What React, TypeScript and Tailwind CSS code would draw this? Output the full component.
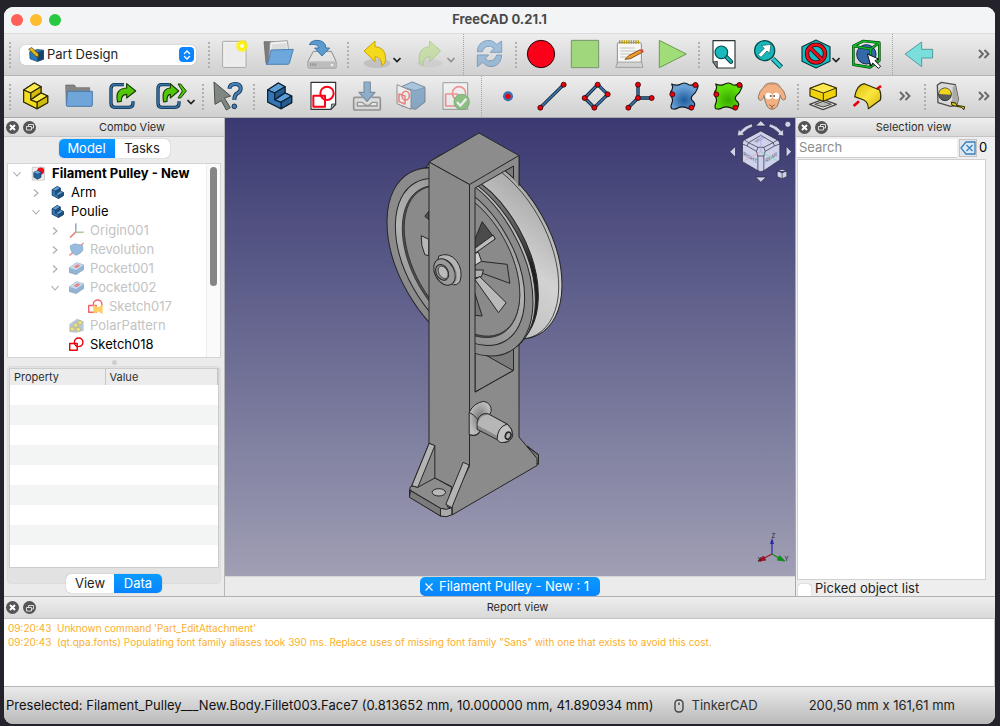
import React, { ReactNode } from "react";

type IconProps = { box: string; children: ReactNode; size?: string };

function Icon({ box, children, size = "size-7" }: IconProps) {
  return (
    <svg viewBox={box} className={`${size} shrink-0 overflow-visible`} fill="none" strokeLinejoin="round" aria-hidden="true">
      {children}
    </svg>
  );
}

function Tool({ label, children, dim }: { label: string; children: ReactNode; dim?: boolean }) {
  return (
    <button type="button" aria-label={label} className={`flex h-10 w-11 shrink-0 items-center justify-center ${dim ? "opacity-50" : ""}`}>
      {children}
    </button>
  );
}

function MenuTool({ label, children, dim }: { label: string; children: ReactNode; dim?: boolean }) {
  return (
    <button type="button" aria-label={label} className={`flex h-10 w-[54px] shrink-0 items-center gap-0.5 pl-3 ${dim ? "opacity-40" : ""}`}>
      {children}
      <svg viewBox="0 0 8 8" className="mt-3 size-2 shrink-0" fill="none" stroke="#222" strokeWidth="1.6" aria-hidden="true">
        <path d="M0.5 2 4 5.5 7.5 2" />
      </svg>
    </button>
  );
}

function Grip() {
  return (
    <div className="flex w-[7px] shrink-0 items-center justify-end pr-[2px]">
      <svg viewBox="0 0 2 26" className="h-[26px] w-[2px]" aria-hidden="true">
        {[0, 4, 8, 12, 16, 20, 24].map((y) => (
          <rect key={y} y={y} width="2" height="2" fill="#b0b0b0" />
        ))}
      </svg>
    </div>
  );
}

function Divider() {
  return (
    <div className="flex w-[9px] shrink-0 justify-center">
      <div className="h-full border-l border-dotted border-[#a5a5a5]" />
    </div>
  );
}

function More({ className }: { className: string }) {
  return (
    <button type="button" aria-label="More tools" className={`flex h-10 shrink-0 items-center justify-center ${className}`}>
      <svg viewBox="0 0 12 10" className="h-[10px] w-3" fill="none" stroke="#666" strokeWidth="1.8" aria-hidden="true">
        <path d="M1 1 5 5 1 9M6.5 1 10.5 5 6.5 9" />
      </svg>
    </button>
  );
}

const Dot = ({ x, y }: { x: number; y: number }) => (
  <circle cx={x} cy={y} r="7.5" fill="#e8000d" stroke="#3a0505" strokeWidth="2.5" />
);

const BLOB =
  "M5 6Q16 12 28 8 44-2 56 8 66 12 78 3 88 8 82 20 78 32 68 40 60 48 67 56 78 64 72 74 66 84 56 80 42 72 28 76 16 84 6 80 0 76 6 62 10 54 4 42-2 32 6 24 10 14 5 6Z";

function BodyShape({ light, mid, dark, line }: { light: string; mid: string; dark: string; line: string }) {
  return (
    <g stroke={line} strokeWidth="3.5">
      <path d="M8 24 40 3 60 14V32L80 42V62L48 80 8 60Z" fill={mid} />
      <path d="M8 24 40 3 60 14 29 33Z" fill={light} />
      <path d="M29 33 60 14V32L48 40 29 54Z" fill={dark} />
      <path d="M29 54 60 33 80 42 48 61Z" fill={light} />
      <path d="M48 61 80 42V62L48 80Z" fill={dark} />
      <path d="M8 24 29 33V54L48 61V80L8 60Z" fill={mid} />
    </g>
  );
}

function FileToolbar() {
  return (
    <div role="toolbar" aria-label="File and view" className="flex h-[42px] shrink-0 border-t border-[#dcdcdc] bg-linear-to-b from-[#ededed] to-[#d0d0d0] pl-[2px]">
      <Grip />
      <div className="relative mr-[9px] ml-[7px] flex items-center">
        <select aria-label="Workbench" className="h-5 w-44 appearance-none rounded-[5px] bg-white pl-[27px] text-[13px] text-[#262626] shadow-[0_0_1px_rgba(0,0,0,0.35)] outline-none">
          <option>Part Design</option>
        </select>
        <svg viewBox="0 0 48 44" className="pointer-events-none absolute left-2 h-[15px] w-4" aria-hidden="true">
          <path d="M5 14 28 7 47 9V36L28 43 6 35Z" fill="#2b79bd" stroke="#173a5b" strokeWidth="2" />
          <path d="M28 15 47 9V36L28 43Z" fill="#16436f" />
          <path d="M2 6 11 1 31 20 33 30 23 27Z" fill="#e3b91b" stroke="#3b3108" strokeWidth="2" />
        </svg>
        <span className="pointer-events-none absolute right-0.5 flex size-[15px] items-center justify-center rounded-[4px] bg-[#0a84ff]">
          <svg viewBox="0 0 8 12" className="h-3 w-2" fill="none" stroke="#fff" strokeWidth="1.4" strokeLinecap="round" aria-hidden="true">
            <path d="M1.5 4.5 4 2 6.5 4.5M1.5 7.5 4 10 6.5 7.5" />
          </svg>
        </span>
      </div>
      <Grip />
      <Tool label="New">
        <Icon box="0 0 84 84">
          <defs>
            <radialGradient id="glow"><stop offset="0.2" stopColor="#fff" /><stop offset="0.35" stopColor="#fff200" /><stop offset="0.7" stopColor="#fff200" stopOpacity="0.85" /><stop offset="1" stopColor="#fff200" stopOpacity="0" /></radialGradient>
          </defs>
          <rect x="8" y="4" width="70" height="78" rx="2" fill="#f4f4f3" stroke="#a7a7a7" strokeWidth="3" />
          <rect x="13" y="9" width="60" height="68" fill="#ececec" />
          <circle cx="66" cy="18" r="20" fill="url(#glow)" />
        </Icon>
      </Tool>
      <Tool label="Open">
        <Icon box="0 0 84 84">
          <path d="M0 5H30V70H6Z" fill="#7c7c7c" stroke="#5c5c5c" strokeWidth="2" />
          <path d="M18 6 70 2 75 40 70 62H14Z" fill="#f3f3f3" stroke="#909090" strokeWidth="2.5" />
          <path d="M24 13 68 9V40H20Z" fill="#dcdcdc" />
          <path d="M21 30 88 28 76 70Q74 73 70 73H6Q12 70 14 60Z" fill="#6ea7dc" stroke="#3c74aa" strokeWidth="2.5" />
        </Icon>
      </Tool>
      <Tool label="Save">
        <Icon box="0 0 84 84">
          <path d="M16 34H70L84 64V82Q84 84 81 84H4Q0 84 0 80V64Z" fill="#e3e3e3" stroke="#8b8b8b" strokeWidth="3" />
          <path d="M1 64H84V82H1Z" fill="#bcbcbc" />
          <path d="M8 70V78M13 70V78M18 70V78M23 70V78" stroke="#808080" strokeWidth="2" />
          <circle cx="72" cy="75" r="4" fill="#eee" />
          <path d="M4 14Q8 2 24 1 52 0 54 24H65L42 48 20 24H33Q30 10 4 14Z" fill="#5b9bcf" stroke="#30699c" strokeWidth="2.5" />
        </Icon>
      </Tool>
      <Grip />
      <MenuTool label="Undo">
        <Icon box="0 0 84 84">
          <ellipse cx="42" cy="70" rx="40" ry="14" fill="#999" opacity="0.35" />
          <path d="M3 33 36 3V20Q67 22 68 54 68 72 56 77 57 52 36 50V65Z" fill="#f5d91d" stroke="#c9a40a" strokeWidth="3" />
        </Icon>
      </MenuTool>
      <MenuTool label="Redo" dim>
        <Icon box="0 0 84 84">
          <ellipse cx="38" cy="70" rx="38" ry="12" fill="#999" opacity="0.35" />
          <path d="M71 33 38 3V20Q7 22 6 54 6 72 18 77 17 52 38 50V65Z" fill="#a5d858" stroke="#72ab28" strokeWidth="3" />
        </Icon>
      </MenuTool>
      <Divider />
      <Tool label="Refresh" dim>
        <Icon box="0 0 84 84">
          <g fill="#5e9bd2" stroke="#27609a" strokeWidth="3">
            <path d="M4 35Q5 12 24 4 45-5 62 13L77 3V37H43L54 25Q44 15 31 20 21 25 19 35Z" />
            <path d="M77 45Q76 68 58 77 37 86 20 67L4 80V45H38L27 56Q37 67 50 61 60 56 62 45Z" />
          </g>
        </Icon>
      </Tool>
      <Grip />
      <Tool label="Record macro">
        <Icon box="0 0 84 84"><circle cx="42" cy="42" r="41" fill="#fa0019" stroke="#26090d" strokeWidth="3" /></Icon>
      </Tool>
      <Tool label="Stop macro">
        <Icon box="0 0 84 84"><rect x="1" y="1" width="82" height="82" fill="#a0d67c" stroke="#78956a" strokeWidth="3" /></Icon>
      </Tool>
      <Tool label="Macros">
        <Icon box="0 0 84 84">
          <rect x="7" y="8" width="72" height="72" rx="3" fill="#f6f6f5" stroke="#8e8e8e" strokeWidth="3" />
          <path d="M2 82 8 66H80L84 82Z" fill="#d2d2d2" stroke="#888" strokeWidth="2" />
          <path d="M14 1V11M21 1V11M28 1V11M35 1V11M42 1V11M49 1V11M56 1V11M63 1V11M70 1V11" stroke="#b39a10" strokeWidth="4" />
          <path d="M16 24H60M16 33H68M16 42H44M16 51H34" stroke="#c4c4c4" strokeWidth="3" />
          <path d="M30 58 42 46 76 29 82 37 46 56Z" fill="#ee9a31" stroke="#6b4210" strokeWidth="2.5" />
          <path d="M74 30 84 28 86 36 80 39Z" fill="#d94747" />
        </Icon>
      </Tool>
      <Tool label="Run macro">
        <Icon box="0 0 84 84"><path d="M1 1 82 42 1 83Z" fill="#a0dc78" stroke="#6c9c52" strokeWidth="3" /></Icon>
      </Tool>
      <Grip />
      <Tool label="Fit all">
        <Icon box="0 0 84 84">
          <path d="M9 2H75V84H22L9 66Z" fill="#fff" stroke="#2e3436" strokeWidth="3.5" />
          <path d="M9 66 22 64V84Z" fill="#888a85" stroke="#2e3436" strokeWidth="2.5" />
          <path d="M46 48 63 65" stroke="#063f40" strokeWidth="13" strokeLinecap="round" />
          <path d="M47 49 63 65" stroke="#17b5b8" strokeWidth="7" strokeLinecap="round" />
          <circle cx="34" cy="37" r="19" fill="#18b9bd" stroke="#074c4d" strokeWidth="3.5" />
        </Icon>
      </Tool>
      <Tool label="Fit selection">
        <Icon box="0 0 84 84">
          <path d="M56 56 82 82" stroke="#074c4d" strokeWidth="15" />
          <path d="M56 56 81 81" stroke="#25ccd0" strokeWidth="9" />
          <circle cx="32" cy="32" r="30" fill="#17b7bb" stroke="#074c4d" strokeWidth="4" />
          <path d="M12 44 31 25 22 17 51 13 47 40 39 33 21 52Z" fill="#fff" stroke="#0c5c5e" strokeWidth="2" />
        </Icon>
      </Tool>
      <MenuTool label="Draw style">
        <Icon box="0 0 84 84">
          <path d="M42 0 84 20V64L42 84 0 64V20Z" fill="#12bec3" stroke="#083c3e" strokeWidth="3.5" />
          <circle cx="42" cy="41" r="27" stroke="#460507" strokeWidth="13" />
          <path d="M23 22 61 60" stroke="#460507" strokeWidth="12" />
          <circle cx="42" cy="41" r="27" stroke="#e8101c" strokeWidth="8" />
          <path d="M22 21 62 61" stroke="#e8101c" strokeWidth="8" />
        </Icon>
      </MenuTool>
      <Tool label="Bounding box">
        <Icon box="0 0 84 84">
          <circle cx="43" cy="43" r="29" fill="#3468a8" stroke="#122b50" strokeWidth="3" />
          <g stroke="#063f0a" strokeWidth="8"><path d="M4 18 34 3 82 8V62L54 82 4 74ZM4 18 56 27 82 8M56 27V80" /></g>
          <g stroke="#10b929" strokeWidth="4.5"><path d="M4 18 34 3 82 8V62L54 82 4 74ZM4 18 56 27 82 8M56 27V80" /></g>
          <path d="M46 42 80 57 69 62 86 79 79 85 62 69 57 79Z" fill="#fff" stroke="#111" strokeWidth="3" />
        </Icon>
      </Tool>
      <Divider />
      <Tool label="Back">
        <Icon box="0 0 84 84"><path d="M0 42 50 6V28H83V54H50V80Z" fill="#7adfdc" stroke="#559b9b" strokeWidth="3" /></Icon>
      </Tool>
      <More className="ml-auto w-[23px]" />
    </div>
  );
}

function ModelToolbar() {
  return (
    <div role="toolbar" aria-label="Part design" className="flex h-[42px] shrink-0 border-t border-[#b5b5b5] bg-linear-to-b from-[#ededed] to-[#d0d0d0] pl-[2px]">
      <Grip />
      <Tool label="Create part">
        <Icon box="0 0 84 84"><BodyShape light="#fce94f" mid="#f2dc1c" dark="#d3bb09" line="#302b00" /></Icon>
      </Tool>
      <Tool label="Create group">
        <Icon box="0 0 84 84">
          <path d="M2 9H28L34 17H74V66H4Z" fill="#858585" stroke="#686868" strokeWidth="2" />
          <path d="M7 28H82V70Q82 73 78 73H7Q4 73 4 70Z" fill="#6fa5d8" stroke="#487baa" strokeWidth="3" />
        </Icon>
      </Tool>
      <Tool label="Make link">
        <Icon box="0 0 84 84">
          <path d="M45 8H18Q6 8 6 20V64Q6 76 18 76H60Q72 76 72 64V58" stroke="#12304a" strokeWidth="10" />
          <path d="M45 8H18Q6 8 6 20V64Q6 76 18 76H60Q72 76 72 64V58" stroke="#3573aa" strokeWidth="5" />
          <path d="M26 60Q16 20 53 18V5L80 27 53 48V37Q36 38 37 58Z" fill="#54c60a" stroke="#173b04" strokeWidth="3.5" />
        </Icon>
      </Tool>
      <MenuTool label="Link actions">
        <Icon box="0 0 84 84">
          <path d="M38 8H14Q3 8 3 20V64Q3 76 14 76H54Q66 76 66 64V58" stroke="#12304a" strokeWidth="10" />
          <path d="M38 8H14Q3 8 3 20V64Q3 76 14 76H54Q66 76 66 64V58" stroke="#3573aa" strokeWidth="5" />
          <path d="M20 60Q12 20 40 18V5L65 27 40 48V37Q29 38 30 58Z" fill="#54c60a" stroke="#173b04" strokeWidth="3.5" />
          <path d="M63 6H71L88 27 71 48H63L76 27Z" fill="#54c60a" stroke="#173b04" strokeWidth="3" />
        </Icon>
      </MenuTool>
      <Grip />
      <Tool label="What's this?">
        <Icon box="0 0 84 84">
          <path d="M0 0 50 42 31 48 49 77 37 84 22 56 3 67Z" fill="#808782" stroke="#4a4f4b" strokeWidth="3" />
          <path d="M46 20Q48 6 64 6 80 6 80 20 80 28 70 34 61 39 61 54" stroke="#12304a" strokeWidth="12" />
          <path d="M46 20Q48 6 64 6 80 6 80 20 80 28 70 34 61 39 61 54" stroke="#4581b8" strokeWidth="7" />
          <circle cx="61" cy="73" r="7" fill="#4581b8" stroke="#12304a" strokeWidth="3" />
        </Icon>
      </Tool>
      <Grip />
      <Tool label="Create body">
        <Icon box="0 0 84 84"><BodyShape light="#5e9fd6" mid="#3476b3" dark="#255d93" line="#0c2238" /></Icon>
      </Tool>
      <Tool label="Create sketch">
        <Icon box="0 0 84 84">
          <path d="M6 1H80V68L66 82H6Z" fill="#fff" stroke="#2e3436" strokeWidth="3.5" />
          <path d="M66 82 68 66 80 66Z" fill="#a7a9a5" stroke="#2e3436" strokeWidth="2.5" />
          <g stroke="#fa0519" strokeWidth="6"><rect x="13" y="41" width="35" height="33" /><circle cx="54" cy="34" r="20" /></g>
        </Icon>
      </Tool>
      <Tool label="Edit sketch" dim>
        <Icon box="0 0 84 84">
          <path d="M29 46H6Q2 46 2 50V80Q2 84 6 84H78Q82 84 82 80V50Q82 46 78 46H56" stroke="#4d4f50" strokeWidth="5" />
          <path d="M13 72V61H27L38 70H48L58 61H72V72Z" fill="#f5f5f5" stroke="#555" strokeWidth="4" />
          <path d="M33 0H52V31H66L42 58 18 31H33Z" fill="#3d7bb4" stroke="#173c5d" strokeWidth="3.5" />
        </Icon>
      </Tool>
      <Tool label="Map sketch to face" dim>
        <Icon box="0 0 84 84">
          <path d="M14 14 46 0 84 16V60L56 82 14 72Z" fill="#3774ad" stroke="#12314d" strokeWidth="3" />
          <path d="M14 14 46 0 84 16 54 26Z" fill="#6aa6da" stroke="#12314d" strokeWidth="2" />
          <path d="M0 8 42 26V82L0 65Z" fill="#f7f7f7" stroke="#404040" strokeWidth="3" />
          <g stroke="#ef2929" strokeWidth="4.5"><path d="M6 36 24 42V66L6 59Z" /><ellipse cx="26" cy="41" rx="11" ry="13" /></g>
        </Icon>
      </Tool>
      <Tool label="Validate sketch" dim>
        <Icon box="0 0 84 84">
          <rect x="6" y="2" width="74" height="80" fill="#fafafa" stroke="#555" strokeWidth="3" />
          <g stroke="#f34a4a" strokeWidth="5"><rect x="14" y="36" width="35" height="36" /><circle cx="54" cy="34" r="20" /></g>
          <circle cx="62" cy="60" r="23" fill="#3da72c" stroke="#277f19" strokeWidth="3" />
          <path d="M48 60 58 71 76 50" stroke="#fff" strokeWidth="7" />
        </Icon>
      </Tool>
      <Divider />
      <Tool label="Datum point">
        <Icon box="0 0 84 84"><circle cx="42" cy="43" r="15" fill="#3873b0" /><circle cx="42" cy="43" r="8" fill="#e8000d" /></Icon>
      </Tool>
      <Tool label="Datum line">
        <Icon box="0 0 84 84">
          <path d="M7 77 77 8" stroke="#12222f" strokeWidth="10" /><path d="M7 77 77 8" stroke="#3873ad" strokeWidth="5" />
          <Dot x={7} y={77} /><Dot x={77} y={8} />
        </Icon>
      </Tool>
      <Tool label="Datum plane">
        <Icon box="0 0 84 84">
          <path d="M47 8 77 37 37 77 8 48Z" stroke="#12222f" strokeWidth="10" /><path d="M47 8 77 37 37 77 8 48Z" stroke="#3873ad" strokeWidth="5" />
          <Dot x={47} y={8} /><Dot x={77} y={37} /><Dot x={37} y={77} /><Dot x={8} y={48} />
        </Icon>
      </Tool>
      <Tool label="Local coordinate system">
        <Icon box="0 0 84 84">
          <path d="M36 8V48L7 77M36 48H77" stroke="#12222f" strokeWidth="10" /><path d="M36 8V48L7 77M36 48H77" stroke="#3873ad" strokeWidth="5" />
          <Dot x={36} y={8} /><Dot x={77} y={48} /><Dot x={7} y={77} /><Dot x={36} y={48} />
        </Icon>
      </Tool>
      <Tool label="Shape binder">
        <Icon box="0 0 84 84">
          <defs><radialGradient id="blueBlob" cy="0.65"><stop stopColor="#1e5a9b" /><stop offset="1" stopColor="#6aa2d8" /></radialGradient></defs>
          <path d={BLOB} fill="url(#blueBlob)" stroke="#101820" strokeWidth="3.5" />
          <Dot x={76} y={9} /><Dot x={7} y={37} /><Dot x={64} y={77} />
        </Icon>
      </Tool>
      <Tool label="Sub-shape binder">
        <Icon box="0 0 84 84">
          <defs><radialGradient id="greenBlob" cy="0.65"><stop stopColor="#38a900" /><stop offset="1" stopColor="#5de00a" /></radialGradient></defs>
          <path d={BLOB} fill="url(#greenBlob)" stroke="#101c08" strokeWidth="3.5" />
          <Dot x={76} y={9} /><Dot x={7} y={37} /><Dot x={64} y={77} />
        </Icon>
      </Tool>
      <Tool label="Clone">
        <Icon box="0 0 84 84">
          <path d="M16 18Q22 2 42 3 62 2 68 18 78 22 83 44 84 54 76 54 68 52 67 40 64 58 58 72 52 82 42 82 32 82 27 72 20 58 18 40 16 54 7 55 0 54 1 44 6 22 16 18Z" fill="#f3b183" stroke="#8d7967" strokeWidth="3" />
          <path d="M22 14Q30 2 42 7 54 2 62 14" stroke="#c98f68" strokeWidth="2.5" />
          <circle cx="32" cy="42" r="10" fill="#fff" /><circle cx="54" cy="42" r="10" fill="#fff" />
          <circle cx="38" cy="42" r="3" fill="#6b5b50" /><circle cx="48" cy="42" r="3" fill="#6b5b50" />
          <path d="M34 68 42 74 50 68M42 74V80" stroke="#8d5f43" strokeWidth="3" />
        </Icon>
      </Tool>
      <Grip />
      <Tool label="Pad">
        <Icon box="0 0 84 84">
          <path d="M2 67 42 52 82 67 42 83Z" fill="#eeeeec" stroke="#444844" strokeWidth="4" />
          <path d="M17 67 42 58 67 67 42 75Z" fill="#b9bab6" stroke="#444844" strokeWidth="3" />
          <path d="M3 19 43 4 82 18V42L43 58 3 42Z" fill="#f0d30a" stroke="#302b00" strokeWidth="3.5" />
          <path d="M3 19 43 4 82 18 43 33Z" fill="#fbe84e" stroke="#302b00" strokeWidth="3" />
          <path d="M43 33V58" stroke="#302b00" strokeWidth="3" />
        </Icon>
      </Tool>
      <Tool label="Revolution">
        <Icon box="0 0 84 84">
          <defs><linearGradient id="barrel" x1="0" y1="0" x2="1" y2="1"><stop stopColor="#d9bd08" /><stop offset="0.5" stopColor="#fbe640" /><stop offset="1" stopColor="#d2b706" /></linearGradient></defs>
          <path d="M2 72 18 58M68 24 84 12" stroke="#e8000d" strokeWidth="8" />
          <path d="M5 44Q12 8 34 5L80 24Q86 40 82 54L46 80Q46 60 32 54Z" fill="url(#barrel)" stroke="#302b00" strokeWidth="3.5" />
        </Icon>
      </Tool>
      <More className="w-8" />
      <Grip />
      <Tool label="Measure">
        <Icon box="0 0 84 84">
          <path d="M4 9 16 1 58 8 67 52 62 70 44 73 6 62Z" fill="#d9dad8" stroke="#4d504d" strokeWidth="4" />
          <path d="M58 8 67 52 62 70 48 72 50 16Z" fill="#aaaba8" />
          <circle cx="27" cy="37" r="19" fill="#595c58" stroke="#343734" strokeWidth="3" />
          <path d="M9 36A18 18 0 0 1 45 38Z" fill="#f2d61a" />
          <path d="M46 60 60 64 62 70 86 74 84 83 76 76 48 70Z" fill="#e6c90d" stroke="#302b00" strokeWidth="3" />
        </Icon>
      </Tool>
      <More className="ml-auto w-[23px]" />
    </div>
  );
}

function PanelHeader({ title, height = "h-[19px]" }: { title: string; height?: string }) {
  return (
    <div className={`flex ${height} shrink-0 items-center gap-1 border-b border-[#c4c4c4] bg-linear-to-b from-[#eeeeee] to-[#d9d9d9] pl-0.5`}>
      <button type="button" aria-label={`Close ${title}`} className="flex size-[13px] shrink-0 items-center justify-center rounded-full bg-[#555]">
        <svg viewBox="0 0 7 7" className="size-[7px]" stroke="#fff" strokeWidth="2" aria-hidden="true"><path d="M1 1 6 6M6 1 1 6" /></svg>
      </button>
      <button type="button" aria-label={`Float ${title}`} className="flex size-[13px] shrink-0 items-center justify-center rounded-full bg-[#555]">
        <svg viewBox="0 0 8 8" className="size-2" fill="none" stroke="#ddd" strokeWidth="1" aria-hidden="true"><path d="M2.5 3V1.5H7.5V5H6M0.5 3.5H5.5V7H0.5Z" /></svg>
      </button>
      <h2 className="flex-1 text-center text-[11px] text-[#2c2c2c]">{title}</h2>
    </div>
  );
}

type Kind = "doc" | "body" | "origin" | "revolution" | "pocket" | "sketchFix" | "polar" | "sketch";

function TreeIcon({ kind }: { kind: Kind }) {
  return (
    <Icon box={kind === "doc" || kind === "body" ? "-6 -6 96 96" : "0 0 84 84"} size="size-[15px]">
      {kind === "doc" && (
        <>
          <rect x="2" y="2" width="78" height="82" fill="#eee" stroke="#b5b5b5" strokeWidth="4" />
          <circle cx="56" cy="26" r="22" fill="#e8101c" />
          <path d="M12 34 36 24 58 34V66L36 78 12 66Z" fill="#25609b" stroke="#0c2945" strokeWidth="4" />
          <path d="M12 34 36 24 58 34 36 44Z" fill="#6aa6dc" />
        </>
      )}
      {kind === "body" && <BodyShape light="#5e9fd6" mid="#3476b3" dark="#1d507f" line="#173d61" />}
      {kind === "origin" && (
        <g strokeWidth="9"><path d="M38 2V50" stroke="#4b7dad" /><path d="M38 52H82" stroke="#72ad55" /><path d="M38 50 6 82" stroke="#d33c3c" /></g>
      )}
      {kind === "revolution" && (
        <>
          <path d="M2 76 82 6" stroke="#e8303c" strokeWidth="7" />
          <path d="M6 22 30 10 74 18Q84 46 66 60L42 74Q10 66 6 22Z" fill="#5090ca" stroke="#3a6a98" strokeWidth="4" />
        </>
      )}
      {kind === "pocket" && (
        <>
          <path d="M2 38 42 10 82 22V48L40 76 2 64Z" fill="#4a84ba" stroke="#33597e" strokeWidth="4" />
          <path d="M2 38 42 10 82 22 40 50Z" fill="#a2c4e3" />
          <path d="M26 34 46 18 64 24 44 41Z" fill="#e2303c" />
        </>
      )}
      {(kind === "sketch" || kind === "sketchFix") && (
        <g stroke="#e8000d" strokeWidth="8"><rect x="4" y="36" width="42" height="38" /><circle cx="54" cy="30" r="24" /></g>
      )}
      {kind === "sketchFix" && <path d="M30 32 56 46 82 32V84L56 70 30 84Z" fill="#ffb000" />}
      {kind === "polar" && (
        <>
          <path d="M2 34 46 4 82 20V72L40 82 2 78Z" fill="#87a6bf" />
          <g fill="#e7cf2f" stroke="#8a7a20" strokeWidth="4"><circle cx="18" cy="62" r="12" /><circle cx="38" cy="40" r="12" /><circle cx="62" cy="26" r="12" /><circle cx="52" cy="64" r="12" /></g>
        </>
      )}
    </Icon>
  );
}

const rows: { text: string; kind: Kind; pad: string; open?: boolean; leaf?: boolean; tone: string; faded?: boolean }[] = [
  { text: "Filament Pulley - New", kind: "doc", pad: "pl-[5px]", open: true, tone: "font-bold text-black" },
  { text: "Arm", kind: "body", pad: "pl-6", tone: "text-black" },
  { text: "Poulie", kind: "body", pad: "pl-6", open: true, tone: "text-black" },
  { text: "Origin001", kind: "origin", pad: "pl-[43px]", tone: "text-[#c3c3c3]", faded: true },
  { text: "Revolution", kind: "revolution", pad: "pl-[43px]", tone: "text-[#c3c3c3]", faded: true },
  { text: "Pocket001", kind: "pocket", pad: "pl-[43px]", tone: "text-[#c3c3c3]", faded: true },
  { text: "Pocket002", kind: "pocket", pad: "pl-[43px]", open: true, tone: "text-[#c3c3c3]", faded: true },
  { text: "Sketch017", kind: "sketchFix", pad: "pl-[62px]", leaf: true, tone: "text-[#c3c3c3]", faded: true },
  { text: "PolarPattern", kind: "polar", pad: "pl-[43px]", leaf: true, tone: "text-[#c3c3c3]", faded: true },
  { text: "Sketch018", kind: "sketch", pad: "pl-[43px]", leaf: true, tone: "text-black" },
];

function ComboView() {
  return (
    <aside className="flex w-[221px] shrink-0 flex-col border-r border-[#b8b8b8] bg-[#ebebeb]">
      <PanelHeader title="Combo View" />
      <div role="tablist" className="mx-auto mt-[2px] flex h-[19px] shrink-0 rounded-[5px] bg-white text-[13px] leading-[19px] shadow-[0_0_1px_rgba(0,0,0,0.4)]">
        <button type="button" role="tab" aria-selected="true" className="w-14 rounded-l-[5px] bg-linear-to-b from-[#0a9bff] to-[#0a84ff] text-white">Model</button>
        <button type="button" role="tab" aria-selected="false" className="w-[55px] text-[#222]">Tasks</button>
      </div>
      <div className="mx-[3px] mt-[5px] flex h-[195px] shrink-0 border border-[#d4d4d4] bg-white">
        <ul role="tree" className="min-w-0 flex-1 overflow-hidden">
          {rows.map((r) => (
            <li key={r.text} role="treeitem" className={`flex h-[19px] items-center whitespace-nowrap text-[13px] ${r.pad} ${r.tone}`}>
              <svg viewBox="0 0 8 8" className="size-2 shrink-0" fill="none" stroke="#a9a9a9" strokeWidth="1.1" aria-hidden="true">
                {!r.leaf && <path d={r.open ? "M0.5 2 4 6 7.5 2" : "M2 0.5 6 4 2 7.5"} />}
              </svg>
              <span className={`mr-[6px] ml-[10px] flex ${r.faded ? "opacity-60" : ""}`}><TreeIcon kind={r.kind} /></span>
              {r.text}
            </li>
          ))}
        </ul>
        <div className="w-[14px] border-l border-[#eeeeee] bg-[#fafafa] px-[3px] py-[3px]">
          <div className="h-[119px] w-[7px] rounded-full bg-[#858585]" />
        </div>
      </div>
      <div className="flex h-2 shrink-0 items-center justify-center"><div className="size-[5px] rounded-full bg-[#cfcfcf]" /></div>
      <div className="mx-[3px] mb-[12px] flex min-h-0 flex-1 flex-col rounded-[4px] border border-[#dddddd] bg-[#e2e2e2]">
        <div className="mx-px mt-px min-h-0 flex-1 overflow-hidden border border-[#cccccc] bg-white">
          <table className="w-full table-fixed border-collapse text-left text-[11px] text-[#2c2c2c]">
            <thead>
              <tr className="h-4 bg-[#ececec] leading-4">
                <th className="w-[95px] border-r border-[#c6c6c6] pl-1 font-normal">Property</th>
                <th className="border-r border-[#c6c6c6] pl-1 font-normal">Value</th>
              </tr>
            </thead>
            <tbody>
              {[0, 1, 2, 3, 4, 5, 6, 7, 8].map((i) => (
                <tr key={i} className="h-5 odd:bg-white even:bg-[#f3f5f5]"><td /><td /></tr>
              ))}
            </tbody>
          </table>
        </div>
        <div role="tablist" className="z-10 mx-auto mt-[6px] -mb-[10px] flex h-[19px] shrink-0 rounded-[5px] bg-white text-[13px] leading-[19px] shadow-[0_0_1px_rgba(0,0,0,0.4)]">
          <button type="button" role="tab" aria-selected="false" className="w-12 text-[#222]">View</button>
          <button type="button" role="tab" aria-selected="true" className="w-12 rounded-r-[5px] bg-linear-to-b from-[#0a9bff] to-[#0a84ff] text-white">Data</button>
        </div>
      </div>
    </aside>
  );
}

function Scene() {
  return (
    <svg viewBox="225 118 569 458" className="h-full w-full" fill="none" strokeLinejoin="round" role="img" aria-label="Pulley model">
      <defs>
        <linearGradient id="rim" x1="480" y1="170" x2="550" y2="345" gradientUnits="userSpaceOnUse">
          <stop offset="0" stopColor="#a8a8a8" /><stop offset="0.35" stopColor="#d2d2d2" /><stop offset="0.65" stopColor="#c2c2c2" /><stop offset="0.85" stopColor="#858585" /><stop offset="1" stopColor="#6a6a6a" />
        </linearGradient>
        <linearGradient id="groove" x1="470" y1="180" x2="530" y2="320" gradientUnits="userSpaceOnUse">
          <stop offset="0" stopColor="#8a8a8a" /><stop offset="0.25" stopColor="#1f1f1f" /><stop offset="0.8" stopColor="#262626" /><stop offset="1" stopColor="#909090" />
        </linearGradient>
        <linearGradient id="ring" x1="395" y1="180" x2="500" y2="350" gradientUnits="userSpaceOnUse">
          <stop offset="0" stopColor="#858585" /><stop offset="0.5" stopColor="#b4b4b4" /><stop offset="1" stopColor="#7c7c7c" />
        </linearGradient>
        <radialGradient id="hub"><stop offset="0.3" stopColor="#8a8a8a" /><stop offset="1" stopColor="#bdbdbd" /></radialGradient>
      </defs>
      <g stroke="#262626" strokeWidth="1">
        <path d="M527 446 538 455V463L528 470Z" fill="#777" />
        <path d="M469 184.500 518.500 155.500V437L536.500 458.500V465.500L451.500 515V400Z" fill="#8b8b8b" />
        <path d="M474.500 188 513 166V370.500L474.500 392Z" fill="#7b7b7b" />
        <path d="M474.500 349 512.500 370.500 474.500 392Z" fill="#8b8b8b" />
        <ellipse cx="488.500" cy="245" rx="102.400" ry="60.600" transform="rotate(60.500 488.500 245)" fill="url(#rim)" />
        <ellipse cx="486" cy="246.500" rx="101.400" ry="60" transform="rotate(60.500 486 246.500)" strokeWidth="0.7" />
        <ellipse cx="467" cy="257.500" rx="99" ry="59" transform="rotate(60.500 467 257.500)" fill="url(#groove)" />
        <ellipse cx="462.500" cy="260.500" rx="101.500" ry="60.200" transform="rotate(60.500 462.500 260.500)" fill="#bcbcbc" />
        <ellipse cx="459.500" cy="262" rx="102.400" ry="60.600" transform="rotate(60.500 459.500 262)" fill="#8b8b8b" />
        <ellipse cx="459.500" cy="262" rx="91" ry="53.500" transform="rotate(60.500 459.500 262)" fill="url(#ring)" />
        <ellipse cx="460.500" cy="261.500" rx="83" ry="48.500" transform="rotate(60.500 460.500 261.500)" fill="#505050" strokeWidth="0.7" />
        <ellipse cx="461.500" cy="261" rx="82" ry="47.500" transform="rotate(60.500 461.500 261)" fill="#8a8a8a" strokeWidth="0.7" />
        <g transform="translate(370 120) scale(0.33333)" strokeWidth="3">
          <path d="M335 305 313 358V385L374 357Z" fill="#4b4b4b" />
          <path d="M313 385 368 345 374 357 313 400Z" fill="#bcbcbc" />
          <path d="M313 433 330 424 410 433 418 490 336 460 313 452Z" fill="#858585" />
          <path d="M313 400 324 397 333 424 313 436Z" fill="#d0d0d0" />
          <path d="M313 450H339L333 470 313 474Z" fill="#b0b0b0" />
          <path d="M313 478 328 470 407 548 384 578Z" fill="#b9b9b9" />
          <path d="M313 520 335 588 313 586Z" fill="#777" />
          <path d="M152 347 175 358V407L163 404Q151 378 152 347Z" fill="#b7b7b7" />
          <path d="M175 274 163 289 175 299Z" fill="#555" />
        </g>
        <path d="M469 184.500 518.500 155.500V186L513 178V166L474.500 188V392L469 396Z" fill="#8b8b8b" stroke="none" />
        <path d="M518.500 186V155.500M513 178V166L474.500 188V392L480 389" />
        <path d="M428.500 162 478.500 133 518.500 155.500 469 184.500Z" fill="#8c8c8c" />
        <path d="M428.500 162 469 184.500V466L451.500 502 428.500 484Z" fill="#8a8a8a" />
      </g>
      <g stroke="#262626" strokeWidth="3" transform="translate(370 120) scale(0.33333)">
        <path d="M205 408Q235 395 258 422 278 450 269 483 260 500 240 492L200 430Z" fill="#b4b4b4" />
        <ellipse cx="227" cy="456" rx="42" ry="29" transform="rotate(62 227 456)" fill="#8b8b8b" stroke="none" />
        <ellipse cx="222" cy="456" rx="42" ry="29" transform="rotate(62 222 456)" fill="#9a9a9a" />
        <ellipse cx="215" cy="457" rx="25" ry="18" transform="rotate(62 215 457)" fill="#8f8f8f" />
        <ellipse cx="218" cy="457" rx="20" ry="13" transform="rotate(62 218 457)" fill="#bbb" strokeWidth="2" />
      </g>
      <g stroke="#262626" strokeWidth="3" transform="translate(380 320) scale(0.33333)">
        <path d="M163 474 93 504 87 510V530L180 588Q198 594 214 584V500Z" fill="#8a8a8a" />
        <path d="M163 474 214 502 200 560 214 566Q198 572 180 565L93 513Q84 506 90 500Z" fill="#8c8c8c" />
        <path d="M90 512 180 565V588L87 532Z" fill="#7b7b7b" />
        <path d="M180 565Q198 572 214 563V584Q198 594 180 588Z" fill="#aaa" />
        <path d="M146 370 163 377V474L112 502 94 497Z" fill="#8a8a8a" />
        <path d="M146 370 163 377 112 502 94 497Z" fill="#b4b4b4" />
        <path d="M248 427 266 435 214 563 196 553Z" fill="#b4b4b4" />
        <ellipse cx="175" cy="517" rx="20" ry="11" fill="#b9b9b9" />
        <path d="M266 277Q280 248 310 244 334 250 332 274L322 294 296 338Q280 352 266 343Z" fill="url(#hub)" />
        <path d="M266 277Q280 284 292 298M270 345Q288 350 298 337" />
        <path d="M290 305Q296 278 322 281L380 312Q398 326 396 348 388 370 366 367L290 328Z" fill="#8c8c8c" />
        <path d="M292 309Q300 284 324 284L376 313Q354 322 350 347L291 316Z" fill="#b6b6b6" stroke="none" />
        <path d="M380 312Q350 322 350 358 356 370 370 367 392 366 397 345 396 326 380 312Z" fill="#c2c2c2" />
        <ellipse cx="383" cy="347" rx="8" ry="11" transform="rotate(20 383 347)" fill="#b4b4b4" strokeWidth="5" />
        <path d="M440 380 474 404V432L470 436" />
      </g>
      <g fill="#ced2ea" stroke="#25253a" strokeWidth="2" transform="translate(700 110) scale(0.33333)">
        <path d="M181 32 197 48H165ZM181 217 197 201H165ZM88 125 105 109V142ZM273 125 257 109V142Z" />
        <path d="M154 41 157 50Q138 57 127 69L132 75 110 78 114 58 120 63Q132 47 154 41Z" />
        <path d="M208 41 205 50Q224 57 235 69L230 75 250 78 248 58 242 63Q230 47 208 41Z" />
        <circle cx="262" cy="43" r="9" />
        <path d="M181 63 231 90Q238 95 238 102V150L190 182Q181 188 172 182L126 155V100Q126 93 132 89Z" />
        <path d="M132 90 144 98 181 76 218 98 231 90M144 98 140 108 126 102M218 98 222 108 238 102M144 98 172 112H190L218 98M140 108 168 124 172 112M222 108 194 124 190 112M168 124 172 138H190L194 124M172 138V184M190 138V184" />
        <g fill="#565b78" stroke="none" fontFamily="Inter, sans-serif" fontSize="16">
          <text transform="matrix(0.87 0.5 0 1 128 136)">RIGHT</text>
          <text transform="matrix(0.87 -0.5 0 1 194 158)">REAR</text>
          <text transform="matrix(0.87 -0.5 0.87 0.5 168 98)" fontSize="13">BELL</text>
        </g>
        <path d="M230 183 245 178 259 183V200L245 206 230 200ZM230 183 245 188 259 183M245 188V206" />
        <path d="M181 70V125" stroke="#a99af4" /><path d="M181 125 132 152" stroke="#e99ab2" /><path d="M181 125 230 152" stroke="#70dca4" />
      </g>
      <g strokeWidth="1.2">
        <path d="M771.500 554V540" stroke="#2929a0" /><path d="M769.500 544 771.500 538 773.500 544Z" fill="#2929a0" />
        <path d="M771.500 554 762 559" stroke="#a31125" /><path d="M758 561 763 556.500 765 560Z" fill="#a31125" stroke="#a31125" />
        <path d="M771.500 554 780 559" stroke="#128c1c" /><path d="M784 561 777 560 779 556Z" fill="#128c1c" stroke="#128c1c" />
        <g fill="#22222c" fontFamily="Inter, sans-serif" fontSize="6"><text x="771" y="538">Z</text><text x="784" y="561">Y</text><text x="757" y="562">X</text></g>
      </g>
    </svg>
  );
}

function Viewport() {
  return (
    <main className="flex min-w-0 flex-1 flex-col bg-[#ececec]">
      <div className="min-h-0 flex-1 bg-linear-to-b from-[#3b3971] to-[#a09fb4]"><Scene /></div>
      <div className="flex h-5 shrink-0 justify-center border-t border-[#d5d5d5] bg-[#ebebeb]">
        <div className="flex h-[19px] w-[180px] items-center gap-[6px] rounded-[5px] bg-linear-to-b from-[#0a9bff] to-[#0a84ff] pl-[5px] text-[13px] text-white">
          <button type="button" aria-label="Close document" className="flex">
            <svg viewBox="0 0 8 8" className="size-2" stroke="#fff" strokeWidth="1.2" aria-hidden="true"><path d="M0.500 0.500 7.500 7.500M7.500 0.500 0.500 7.500" /></svg>
          </button>
          <span className="whitespace-nowrap">Filament Pulley - New : 1</span>
        </div>
      </div>
    </main>
  );
}

function SelectionView() {
  return (
    <aside className="flex w-[200px] shrink-0 flex-col border-l border-[#a9a9a9] bg-[#eeeeee]">
      <PanelHeader title="Selection view" />
      <div className="flex h-[22px] shrink-0 items-center gap-0.5 pl-px">
        <input aria-label="Search" placeholder="Search" className="h-[19px] w-40 min-w-0 border-b border-[#cfcfcf] bg-white px-[2px] text-[13px] outline-none placeholder:text-[#8c8c8c]" />
        <button type="button" aria-label="Clear search" className="flex size-[18px] shrink-0 items-center justify-center border border-[#c2c2c2] bg-[#e2e6ea]">
          <svg viewBox="0 0 16 14" className="h-[14px] w-4" fill="#d9ebf9" stroke="#3d7eb8" strokeWidth="1.3" aria-hidden="true"><path d="M1 7 6 1H15V13H6ZM6.500 4 12.500 10M12.500 4 6.500 10" /></svg>
        </button>
        <span className="text-[13px] text-black">0</span>
      </div>
      <div className="mr-[9px] ml-px min-h-0 flex-1 border border-[#d0d0d0] bg-white" />
      <label className="ml-[2px] flex h-4 shrink-0 items-end gap-1 text-[13px] leading-[15px] text-[#1e1e1e]">
        <input type="checkbox" className="h-3 w-[13px] shrink-0 appearance-none rounded-t-[3px] bg-white shadow-[0_0_1px_rgba(0,0,0,0.5)]" />
        Picked object list
      </label>
    </aside>
  );
}

export default function App() {
  return (
    <div className="flex h-screen flex-col bg-[#24222b] pt-[7px] pr-[5px] pb-0.5 pl-1 font-['Inter','Liberation_Sans',sans-serif]">
      <div className="flex min-h-0 flex-1 flex-col overflow-hidden rounded-[9px] bg-[#ececec]">
        <header className="grid h-[26px] shrink-0 grid-cols-[1fr_auto_1fr] items-center bg-[#f2f4f5]">
          <div className="flex gap-[7px] pl-[7px]">
            <button type="button" aria-label="Close" className="size-3 rounded-full bg-[#fe5f57]" />
            <button type="button" aria-label="Minimize" className="size-3 rounded-full bg-[#febc2e]" />
            <button type="button" aria-label="Zoom" className="size-3 rounded-full bg-[#28c840]" />
          </div>
          <h1 className="text-[13px] font-bold text-[#4a4a4a]">FreeCAD 0.21.1</h1>
        </header>
        <FileToolbar />
        <ModelToolbar />
        <div className="flex min-h-0 flex-1 border-t border-[#a8a8a8]">
          <ComboView />
          <Viewport />
          <SelectionView />
        </div>
        <section className="shrink-0 border-t border-[#b0b0b0]">
          <PanelHeader title="Report view" height="h-[22px]" />
          <div className="h-[67px] border-r border-[#c8c8c8] bg-white px-1 pt-[2px] text-[10px] leading-[14px] whitespace-pre text-[#fbb02c]">
            <p>09:20:43  Unknown command 'Part_EditAttachment'</p>
            <p>09:20:43  (qt.qpa.fonts) Populating font family aliases took 390 ms. Replace uses of missing font family "Sans" with one that exists to avoid this cost.</p>
          </div>
        </section>
        <footer className="flex h-[38px] shrink-0 items-center border-t border-[#b5b5b5] bg-linear-to-b from-[#ebebeb] to-[#b9b9b9] pr-10 pl-0.5 text-[13px] whitespace-nowrap text-[#111]">
          <span className="flex-1">Preselected: Filament_Pulley___New.Body.Fillet003.Face7 (0.813652 mm, 10.000000 mm, 41.890934 mm)</span>
          <button type="button" className="flex items-center gap-2 text-[#333]">
            <svg viewBox="0 0 10 14" className="h-[14px] w-[10px]" fill="none" stroke="#444" strokeWidth="1.400" aria-hidden="true"><rect x="1" y="1" width="8" height="12" rx="3.500" /><path d="M5 3.500V6" /></svg>
            TinkerCAD
          </button>
          <span className="ml-[51px] text-[#222]">200,50 mm x 161,61 mm</span>
        </footer>
      </div>
    </div>
  );
}
